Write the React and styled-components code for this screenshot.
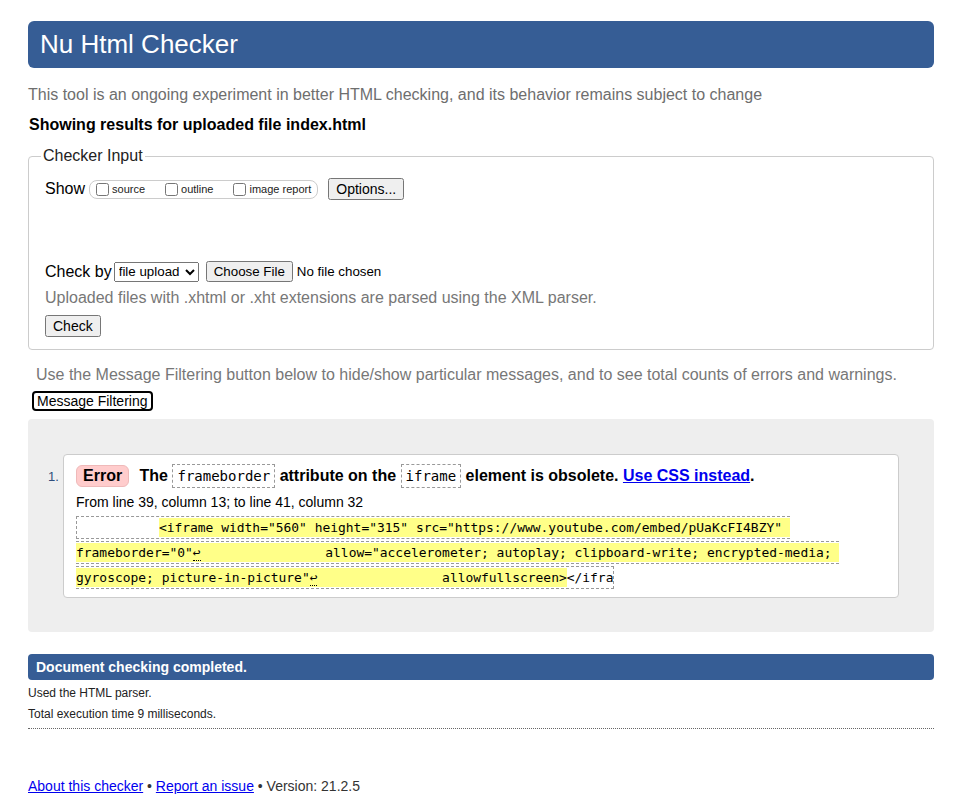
import styled, { createGlobalStyle } from "styled-components";

const GlobalStyle = createGlobalStyle`
  body {
    margin: 0;
    background: #fff;
    font-family: "Liberation Sans", Arial, sans-serif;
    color: #000;
  }
`;

const Page = styled.div`
  padding: 21px 29px 40px 28px;
`;

const Title = styled.h1`
  margin: 0;
  height: 47px;
  line-height: 47px;
  padding: 0 12px;
  border-radius: 6px;
  background: #365d95;
  color: #fff;
  font-size: 26px;
  font-weight: normal;
`;

const Tagline = styled.p`
  margin: 18px 0 0 0;
  font-size: 16px;
  line-height: 18px;
  color: #6e6e6e;
`;

const Showing = styled.p`
  margin: 12px 0 0 1px;
  font-size: 16px;
  line-height: 18px;
  font-weight: bold;
`;

const Fieldset = styled.fieldset`
  margin: 13px 0 0 0;
  padding: 0 16px 12px 16px;
  border: 1px solid #ccc;
  border-radius: 4px;
`;

const Legend = styled.legend`
  margin-left: -4px;
  padding: 0 2px;
  font-size: 16px;
  line-height: 18px;
  color: #222;
`;

const Row = styled.div`
  display: flex;
  align-items: center;
  margin-top: ${(p) => p.$top || 0}px;
  font-size: 16px;
`;

const Label = styled.span`
  margin-right: ${(p) => p.$gap ?? 4}px;
`;

const CheckGroup = styled.span`
  display: inline-flex;
  align-items: center;
  height: 17px;
  padding: 0 6px 0 2px;
  border: 1px solid #ccc;
  border-radius: 8px;
  font-size: 11px;
`;

const CheckLabel = styled.label`
  display: inline-flex;
  align-items: center;
  margin-right: ${(p) => (p.$last ? 0 : 16)}px;
  color: #222;

  input {
    margin: 0 3px 0 4px;
    width: 13px;
    height: 13px;
  }
`;

const NativeButton = styled.button`
  font-family: "Liberation Sans", Arial, sans-serif;
  font-size: 14px;
  padding: 1px 6px;
  margin-left: ${(p) => p.$left || 0}px;
  color: #000;
`;

const Select = styled.select`
  font-family: "Liberation Sans", Arial, sans-serif;
  font-size: 13.33px;
  width: 85px;
  height: 20px;
  margin: 0;
`;

const FileInput = styled.input`
  font-family: "Liberation Sans", Arial, sans-serif;
  font-size: 13.33px;
  margin-left: 7px;
`;

const Hint = styled.p`
  margin: ${(p) => p.$top || 0}px 0 0 ${(p) => p.$left || 0}px;
  font-size: 16px;
  line-height: 18px;
  color: #777;
`;

const FilterButton = styled.button`
  display: block;
  margin: 7px 0 0 4px;
  padding: 0 3px;
  height: 20px;
  border: 2px solid #000;
  border-radius: 4px;
  background: #fff;
  font-family: "Liberation Sans", Arial, sans-serif;
  font-size: 14px;
  color: #000;
`;

const Results = styled.div`
  margin-top: 8px;
  padding: 35px 35px 34px 20px;
  background: #eee;
  border-radius: 4px;
`;

const MessageRow = styled.div`
  display: flex;
  align-items: flex-start;
`;

const Num = styled.span`
  width: 15px;
  padding-top: 15px;
  font-size: 13px;
  line-height: 16px;
  color: #2e4d7b;
`;

const Item = styled.div`
  flex: 1;
  background: #fff;
  border: 1px solid #ccc;
  border-radius: 4px;
  padding: 8px 12px 7px 12px;
`;

const Message = styled.p`
  margin: 0;
  font-size: 16px;
  line-height: 26px;
  font-weight: bold;
`;

const Badge = styled.strong`
  display: inline-block;
  line-height: 20px;
  padding: 0 6px;
  margin-right: 6px;
  background: #fcc;
  border: 1px solid #efb9b9;
  border-radius: 6px;
`;

const InlineCode = styled.code`
  font-family: "DejaVu Sans Mono", "Liberation Mono", monospace;
  font-size: 14px;
  font-weight: normal;
  padding: 3px 4px;
  border: 1px dashed #999;
`;

const Link = styled.a`
  color: #00e;
  text-decoration: underline;
`;

const Location = styled.p`
  margin: 4px 0 0 0;
  font-size: 14px;
  line-height: 18px;
`;

const Extract = styled.p`
  margin: 4px 0 0 0;
  font-family: "DejaVu Sans Mono", "Liberation Mono", monospace;
  font-size: 12.95px;
  line-height: 25px;
`;

const ExtractCode = styled.code`
  font: inherit;
  white-space: pre-wrap;
  padding: 3px 0 3px 4px;
  border: 1px dashed #999;
`;

const Mark = styled.b`
  font-weight: normal;
  background: #ff8;
  padding: 2px 0;
`;

const LineBreak = styled.span`
  border-bottom: 1px dotted #000;
`;

const DoneBar = styled.h2`
  margin: 22px 0 0 0;
  height: 26px;
  line-height: 26px;
  padding: 0 8px;
  border-radius: 4px;
  background: #365d95;
  color: #fff;
  font-size: 14px;
  font-weight: bold;
`;

const Stats = styled.div`
  padding-bottom: 4px;
  border-bottom: 1px dotted #666;
`;

const StatLine = styled.p`
  margin: ${(p) => p.$top || 0}px 0 0 0;
  font-size: 12px;
  line-height: 20px;
  color: #222;
`;

const Footer = styled.p`
  margin: 48px 0 0 0;
  font-size: 14px;
  line-height: 18px;
  color: #333;
`;

const sp = (n) => " ".repeat(n);

export default function App() {
  return (
    <>
      <GlobalStyle />
      <Page>
        <Title>Nu Html Checker</Title>
        <Tagline>
          This tool is an ongoing experiment in better HTML checking, and its behavior remains subject to change
        </Tagline>
        <Showing>Showing results for uploaded file index.html</Showing>

        <Fieldset>
          <Legend>Checker Input</Legend>
          <Row $top={13}>
            <Label>Show</Label>
            <CheckGroup>
              <CheckLabel>
                <input type="checkbox" />
                source
              </CheckLabel>
              <CheckLabel>
                <input type="checkbox" />
                outline
              </CheckLabel>
              <CheckLabel $last>
                <input type="checkbox" />
                image report
              </CheckLabel>
            </CheckGroup>
            <NativeButton $left={10}>Options...</NativeButton>
          </Row>
          <Row $top={61}>
            <Label $gap={2}>Check by</Label>
            <Select defaultValue="file">
              <option value="file">file upload</option>
            </Select>
            <FileInput type="file" />
          </Row>
          <Hint $top={7}>Uploaded files with .xhtml or .xht extensions are parsed using the XML parser.</Hint>
          <Row $top={8}>
            <NativeButton>Check</NativeButton>
          </Row>
        </Fieldset>

        <Hint $top={16} $left={8}>
          Use the Message Filtering button below to hide/show particular messages, and to see total counts of errors and warnings.
        </Hint>
        <FilterButton>Message Filtering</FilterButton>

        <Results>
          <MessageRow>
            <Num>1.</Num>
            <Item>
              <Message>
                <Badge>Error</Badge> The <InlineCode>frameborder</InlineCode> attribute on the{" "}
                <InlineCode>iframe</InlineCode> element is obsolete. <Link href="#">Use CSS instead</Link>.
              </Message>
              <Location>From line 39, column 13; to line 41, column 32</Location>
              <Extract>
                <ExtractCode>
                  {sp(10)}
                  <Mark>
                    {'<iframe width="560" height="315" src="https://www.youtube.com/embed/pUaKcFI4BZY" frameborder="0"'}
                    <LineBreak>↩</LineBreak>
                    {sp(16) +
                      'allow="accelerometer; autoplay; clipboard-write; encrypted-media; gyroscope; picture-in-picture"'}
                    <LineBreak>↩</LineBreak>
                    {sp(16) + "allowfullscreen>"}
                  </Mark>
                  {"</ifra"}
                </ExtractCode>
              </Extract>
            </Item>
          </MessageRow>
        </Results>

        <DoneBar>Document checking completed.</DoneBar>
        <Stats>
          <StatLine $top={3}>Used the HTML parser.</StatLine>
          <StatLine $top={1}>Total execution time 9 milliseconds.</StatLine>
        </Stats>

        <Footer>
          <Link href="#">About this checker</Link> • <Link href="#">Report an issue</Link> • Version: 21.2.5
        </Footer>
      </Page>
    </>
  );
}
